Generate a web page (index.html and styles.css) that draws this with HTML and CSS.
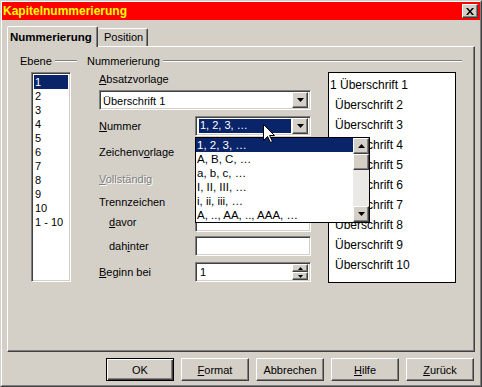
FILE: index.html
```html
<!DOCTYPE html>
<html lang="de">
<head>
  <meta charset="UTF-8">
  <title>Kapitelnummerierung</title>
  <link rel="stylesheet" href="styles.css">
</head>
<body>
  <div class="window">
    <div class="frame">
      <div class="titlebar">
        <span class="title">Kapitelnummerierung</span>
        <span class="close-btn">
          <svg width="8" height="7" viewBox="0 0 8 7"><path d="M0 0h2l2 2.5L6 0h2L5 3.5 8 7H6L4 4.5 2 7H0l3-3.5z" fill="#000"/></svg>
        </span>
      </div>

      <div class="dialog">
        <div class="tabs">
          <div class="tab active">Nummerierung</div>
          <div class="tab">Position</div>
        </div>

        <div class="panel">
          <div class="group-heads">
            <div class="group-head head-level"><span>Ebene</span><i class="etch"></i></div>
            <div class="group-head head-numbering"><span>Nummerierung</span><i class="etch"></i></div>
          </div>

          <div class="panel-body">
            <ul class="level-list sunken">
              <li class="selected">1</li>
              <li>2</li>
              <li>3</li>
              <li>4</li>
              <li>5</li>
              <li>6</li>
              <li>7</li>
              <li>8</li>
              <li>9</li>
              <li>10</li>
              <li>1 - 10</li>
            </ul>

            <div class="form">
              <div class="label-top"><u>A</u>bsatzvorlage</div>
              <div class="combo sunken wide">
                <span class="combo-text">Überschrift 1</span>
                <span class="arrow-btn raised"><svg width="7" height="4" viewBox="0 0 7 4"><polygon points="0,0 7,0 3.5,4" fill="#000"/></svg></span>
              </div>

              <div class="row row-number">
                <span class="lbl"><u>N</u>ummer</span>
                <div class="ctl number-field">
                  <div class="combo sunken">
                    <span class="combo-text selected">1, 2, 3, …</span>
                    <span class="arrow-btn raised"><svg width="7" height="4" viewBox="0 0 7 4"><polygon points="0,0 7,0 3.5,4" fill="#000"/></svg></span>
                  </div>

                  <div class="popup">
                    <ul class="popup-list">
                      <li class="selected">1, 2, 3, …</li>
                      <li>A, B, C, …</li>
                      <li>a, b, c, …</li>
                      <li>I, II, III, …</li>
                      <li>i, ii, iii, …</li>
                      <li>A, .., AA, .., AAA, …</li>
                    </ul>
                    <div class="scrollbar">
                      <span class="arrow-btn raised"><svg width="7" height="4" viewBox="0 0 7 4"><polygon points="3.5,0 7,4 0,4" fill="#000"/></svg></span>
                      <span class="thumb raised"></span>
                      <span class="track"></span>
                      <span class="arrow-btn raised"><svg width="7" height="4" viewBox="0 0 7 4"><polygon points="0,0 7,0 3.5,4" fill="#000"/></svg></span>
                    </div>
                  </div>

                  <svg class="cursor" width="12" height="19" viewBox="0 0 12 19"><path d="M0.5 0.5V16.5L4.5 12.5L7.5 18.5L9.5 17.5L6.5 11.5H11.5Z" fill="#fff" stroke="#000" stroke-width="1"/></svg>
                </div>
              </div>

              <div class="row row-charstyle">
                <span class="lbl">Zeichenv<u>o</u>rlage</span>
                <div class="ctl combo sunken">
                  <span class="combo-text"></span>
                  <span class="arrow-btn raised"></span>
                </div>
              </div>

              <div class="row row-full">
                <span class="lbl disabled"><u>V</u>ollständig</span>
                <div class="ctl edit sunken"></div>
              </div>

              <div class="label-sep">Trennzeichen</div>

              <div class="row row-before">
                <span class="lbl indent"><u>d</u>avor</span>
                <div class="ctl edit sunken"></div>
              </div>

              <div class="row row-after">
                <span class="lbl indent">dah<u>i</u>nter</span>
                <div class="ctl edit sunken"></div>
              </div>

              <div class="row row-start">
                <span class="lbl"><u>B</u>eginn bei</span>
                <div class="ctl edit sunken spin">
                  <span class="edit-text">1</span>
                  <span class="spin-btns">
                    <span class="spin-btn raised"><svg width="5" height="3" viewBox="0 0 5 3"><polygon points="2.5,0 5,3 0,3" fill="#000"/></svg></span>
                    <span class="spin-btn raised"><svg width="5" height="3" viewBox="0 0 5 3"><polygon points="0,0 5,0 2.5,3" fill="#000"/></svg></span>
                  </span>
                </div>
              </div>
            </div>

            <div class="preview">
              <div class="first">1 Überschrift 1</div>
              <div>Überschrift 2</div>
              <div>Überschrift 3</div>
              <div>Überschrift 4</div>
              <div>Überschrift 5</div>
              <div>Überschrift 6</div>
              <div>Überschrift 7</div>
              <div>Überschrift 8</div>
              <div>Überschrift 9</div>
              <div>Überschrift 10</div>
            </div>
          </div>
        </div>

        <div class="buttons">
          <button class="btn default">OK</button>
          <button class="btn"><u>F</u>ormat</button>
          <button class="btn">Abbrechen</button>
          <button class="btn"><u>H</u>ilfe</button>
          <button class="btn"><u>Z</u>urück</button>
        </div>
      </div>
    </div>
  </div>
</body>
</html>
```

FILE: styles.css
```css
:root {
  --face: #d4d0c8;
  --shadow: #808080;
  --dark: #404040;
  --light: #ffffff;
  --navy: #0a246a;
  --title-bg: #ff0000;
  --title-text: #ffff00;
  --track: #ebe9e5;
}

* {
  box-sizing: border-box;
}

body {
  margin: 0;
  font-family: 'Liberation Sans', Arial, sans-serif;
  font-size: 11px;
  color: #000;
  background: var(--face);
}

ul {
  list-style: none;
  margin: 0;
  padding: 0;
}

u {
  text-decoration: underline;
  text-underline-offset: 1px;
}

/* 3d borders */
.raised {
  background: var(--face);
  border: 1px solid;
  border-color: var(--light) var(--dark) var(--dark) var(--light);
  box-shadow: inset -1px -1px var(--shadow), inset 1px 1px var(--face);
}

.sunken {
  background: #fff;
  border: 1px solid;
  border-color: var(--shadow) var(--light) var(--light) var(--shadow);
  box-shadow: inset 1px 1px var(--dark), inset -1px -1px var(--face);
}

/* window */
.window {
  width: 482px;
  height: 387px;
  border: 1px solid;
  border-color: var(--face) var(--dark) var(--dark) var(--face);
}

.frame {
  height: 100%;
  border: 1px solid;
  border-color: var(--light) var(--shadow) var(--shadow) var(--light);
}

.titlebar {
  height: 18px;
  background: var(--title-bg);
  display: flex;
  align-items: center;
  justify-content: space-between;
  padding: 0 2px 0 1px;
}

.title {
  color: var(--title-text);
  font-weight: bold;
  font-size: 12px;
  line-height: 18px;
}

.close-btn {
  width: 16px;
  height: 14px;
  display: flex;
  align-items: center;
  justify-content: center;
  background: var(--face);
  border: 1px solid;
  border-color: var(--light) var(--dark) var(--dark) var(--light);
  box-shadow: inset -1px -1px var(--shadow);
}

.dialog {
  padding: 6px 5px 0 5px;
}

/* tabs */
.tabs {
  display: flex;
  align-items: flex-end;
  height: 21px;
  margin-bottom: -1px;
  position: relative;
  z-index: 1;
}

.tab {
  height: 18px;
  margin-bottom: 1px;
  padding: 1px 0 0 6px;
  line-height: 14px;
  width: 50px;
  background: var(--face);
  border-top: 1px solid var(--light);
  border-right: 1px solid var(--dark);
  box-shadow: inset -1px 0 var(--shadow);
  border-radius: 2px 2px 0 0;
}

.tab.active {
  width: 91px;
  height: 21px;
  margin-bottom: 0;
  padding: 3px 0 0 2px;
  font-weight: bold;
  font-size: 11.5px;
  border-left: 1px solid var(--light);
}

.panel {
  height: 306px;
  border: 1px solid;
  border-color: var(--light) var(--dark) var(--dark) var(--light);
  box-shadow: inset -1px -1px var(--shadow);
  padding: 7px 12px 0 12px;
}

/* group headings */
.group-heads {
  display: flex;
  height: 14px;
  line-height: 14px;
  gap: 10px;
}

.group-head {
  display: flex;
  align-items: center;
}

.head-level {
  width: 57px;
}

.head-numbering {
  flex: 1;
}

.etch {
  flex: 1;
  height: 2px;
  margin-left: 3px;
  border-top: 1px solid var(--shadow);
  border-bottom: 1px solid var(--light);
}

.panel-body {
  display: flex;
  margin: 4px 0 0 11px;
}

/* level list */
.level-list {
  width: 40px;
  height: 210px;
  padding: 2px;
}

.level-list li {
  height: 14px;
  line-height: 14px;
  padding-left: 1px;
}

.level-list li.selected {
  background: var(--navy);
  color: #fff;
}

/* form column */
.form {
  width: 212px;
  margin-left: 28px;
  display: flex;
  flex-direction: column;
}

.label-top,
.label-sep {
  height: 14px;
  line-height: 14px;
}

.label-sep {
  margin-top: 6px;
}

.combo {
  height: 20px;
  display: flex;
  align-items: center;
  padding: 2px;
}

.combo.wide {
  margin-top: 4px;
}

.combo-text {
  flex: 1;
  height: 100%;
  line-height: 16px;
  padding-left: 1px;
  white-space: nowrap;
}

.combo-text.selected {
  background: var(--navy);
  color: #fff;
  margin: 1px;
  height: 14px;
  line-height: 12px;
  outline: 1px dotted #fff;
  outline-offset: 0;
}

.arrow-btn {
  width: 16px;
  height: 16px;
  display: flex;
  align-items: center;
  justify-content: center;
  flex-shrink: 0;
}

.row {
  display: flex;
  align-items: center;
  height: 20px;
}

.lbl {
  width: 96px;
  flex-shrink: 0;
}

.lbl.indent {
  padding-left: 10px;
}

.lbl.disabled {
  color: var(--shadow);
  text-shadow: 1px 1px var(--light);
}

.ctl {
  width: 116px;
  height: 20px;
}

.row-number { margin-top: 6px; }
.row-charstyle { margin-top: 6px; }
.row-full { margin-top: 7px; }
.row-before { margin-top: 3px; }
.row-after { margin-top: 4px; }
.row-start { margin-top: 6px; }

.edit {
  display: flex;
  align-items: center;
  padding: 2px;
}

.edit-text {
  flex: 1;
  padding-left: 2px;
}

.spin-btns {
  display: flex;
  flex-direction: column;
}

.spin-btn {
  width: 16px;
  height: 8px;
  display: flex;
  align-items: center;
  justify-content: center;
}

/* dropdown popup */
.number-field {
  position: relative;
}

.popup {
  position: absolute;
  left: 0;
  top: 21px;
  width: 175px;
  height: 86px;
  border: 1px solid #000;
  background: #fff;
  display: flex;
  z-index: 2;
}

.popup-list {
  flex: 1;
}

.popup-list li {
  height: 14px;
  line-height: 14px;
  padding-left: 1px;
  white-space: nowrap;
  font-size: 11.5px;
}

.popup-list li.selected {
  background: var(--navy);
  color: #fff;
}

.scrollbar {
  width: 16px;
  display: flex;
  flex-direction: column;
}

.thumb {
  height: 16px;
}

.track {
  flex: 1;
  background: var(--track);
}

.cursor {
  position: absolute;
  left: 68px;
  top: 8px;
  z-index: 3;
}

/* preview */
.preview {
  width: 128px;
  height: 211px;
  margin-left: 17px;
  background: #fff;
  border: 1px solid #000;
  padding: 2px 0 0 6px;
  font-size: 12px;
  line-height: 20px;
  white-space: nowrap;
}

.preview .first {
  margin-left: -5px;
}

/* bottom buttons */
.buttons {
  display: flex;
  justify-content: flex-end;
  gap: 7px;
  margin: 6px 1px 0 0;
}

.btn {
  width: 68px;
  height: 23px;
  font-family: inherit;
  font-size: 11px;
  color: #000;
  padding: 0;
  background: var(--face);
  border: 1px solid;
  border-color: var(--light) var(--dark) var(--dark) var(--light);
  box-shadow: inset -1px -1px var(--shadow), inset 1px 1px var(--face);
}

.btn.default {
  border-color: #000;
  box-shadow: inset 1px 1px var(--light), inset -1px -1px var(--dark), inset -2px -2px var(--shadow);
}
```
